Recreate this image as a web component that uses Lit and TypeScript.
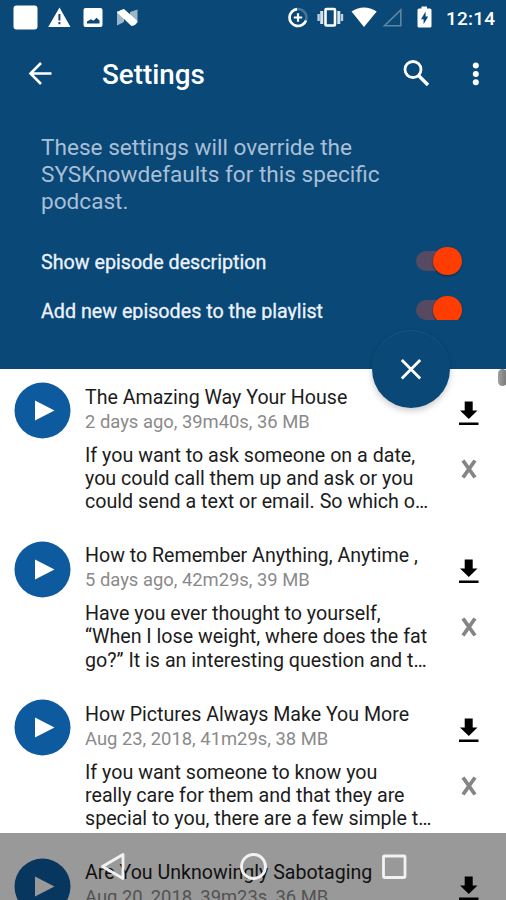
import { LitElement, html, css } from "lit";
import { customElement, property } from "lit/decorators.js";

interface Episode {
  title: string;
  meta: string;
  lines: string[];
}

const EPISODES: Episode[] = [
  {
    title: "The Amazing Way Your House",
    meta: "2 days ago, 39m40s, 36 MB",
    lines: ["If you want to ask someone on a date,", "you could call them up and ask or you", "could send a text or email. So which o…"],
  },
  {
    title: "How to Remember Anything, Anytime ,",
    meta: "5 days ago, 42m29s, 39 MB",
    lines: ["Have you ever thought to yourself,", "“When I lose weight, where does the fat", "go?” It is an interesting question and t…"],
  },
  {
    title: "How Pictures Always Make You More",
    meta: "Aug 23, 2018, 41m29s, 38 MB",
    lines: ["If you want someone to know you", "really care for them and that they are", "special to you, there are a few simple t…"],
  },
  {
    title: "Are You Unknowingly Sabotaging",
    meta: "Aug 20, 2018, 39m23s, 36 MB",
    lines: [],
  },
];

@customElement("status-bar")
class StatusBar extends LitElement {
  static styles = css`
    :host { display: block; height: 36px; }
    svg { display: block; }
    text { font: 500 19px Roboto, sans-serif; letter-spacing: 0.2px; }
  `;
  render() {
    return html`<svg width="506" height="36" viewBox="0 0 506 36" fill="#fff">
      <rect x="13.5" y="5.5" width="24" height="24" rx="3" />
      <path fill-rule="evenodd" d="M59.5 7.5 70.5 27H48.2ZM58.4 14v6.5h2V14ZM58.4 22v2.3h2V22Z" />
      <path fill-rule="evenodd" d="M85.5 8h15a2 2 0 0 1 2 2v15a2 2 0 0 1-2 2h-15a2 2 0 0 1-2-2V10a2 2 0 0 1 2-2ZM87 23.500h12.500V20.500l-3-2.800-3 3-2.500-1.500-4 2.300Z" />
      <path opacity=".6" d="M117 11 124 13V22L117 25.500ZM130 12 137.500 9.500V23L130 21Z" />
      <path d="M117 12.500Q120 9.500 124 9L137.500 21Q136.500 25.500 131.500 26Z" />
      <g fill="none" stroke="#fff" stroke-width="2.600">
        <circle cx="298" cy="17.500" r="8.500" opacity=".25" />
        <path d="M297 9.100A8.500 8.500 0 1 0 306 20.500" />
        <path d="M298 13.300v8.400M293.800 17.500h8.400" stroke-width="2.200" />
        <rect x="325.500" y="9" width="9.500" height="16.500" rx="1" />
        <path d="M321.700 11v13M338.800 11v13" stroke-width="3" opacity=".85" />
        <path d="M318.600 14v7M342 14v7" stroke-width="2.400" opacity=".75" />
      </g>
      <path d="M364 27 351.500 11.500Q364 3.500 376.700 11.500Z" />
      <path d="M400.800 10v15.800H384.500Z" fill="none" stroke="#fff" stroke-width="1.600" opacity=".35" />
      <path fill-rule="evenodd" d="M421.500 6.500h5.500v2h3a1.500 1.500 0 0 1 1.500 1.500v16a1.500 1.500 0 0 1-1.500 1.500h-11a1.500 1.500 0 0 1-1.500-1.500v-16a1.500 1.500 0 0 1 1.500-1.500h2.500ZM425.600 11.500l-4.600 7.800h2.600v5l4.600-7.800h-2.600Z" />
      <text x="446" y="24.500">12:14</text>
    </svg>`;
  }
}

@customElement("toggle-row")
class ToggleRow extends LitElement {
  @property() label = "";
  static styles = css`
    :host { display: flex; align-items: center; height: 49px; flex: none; padding: 0 44.500px 0 41px; justify-content: space-between; }
    .label { margin-top: 2px; font: 19.700px/24px Roboto, sans-serif; color: #edf2fb; white-space: nowrap; -webkit-text-stroke: 0.3px #edf2fb; }
    .track { width: 45.500px; height: 20px; border-radius: 10px; background: #554a61; display: flex; align-items: center; justify-content: flex-end; margin-top: -1px; }
    .thumb { width: 28.500px; height: 28.500px; flex: none; border-radius: 50%; background: #ff3d00; box-shadow: 0 1px 2px rgba(0, 0, 0, 0.4); }
  `;
  render() {
    return html`<span class="label">${this.label}</span><span class="track"><span class="thumb"></span></span>`;
  }
}

@customElement("episode-row")
class EpisodeRow extends LitElement {
  @property({ attribute: false }) episode!: Episode;
  static styles = css`
    :host { display: grid; grid-template-columns: 85px minmax(0, 1fr) 75px; height: 158.500px; flex: none; font: 19.670px/23.200px Roboto, sans-serif; color: #1c1c1c; white-space: nowrap; }
    svg { display: block; }
    .play { padding: 13.900px 0 0 14px; }
    .body { padding-top: 16.400px; }
    .title { line-height: 25px; font-size: 19.600px; }
    .meta { line-height: 24px; color: #8a8a8a; font-size: 18.400px; }
    .text { margin-top: 9.800px; }
    .actions { padding: 32px 0 0 26px; }
  `;
  render() {
    const e = this.episode;
    return html`
      <div class="play">
        <svg width="57" height="57" viewBox="0 0 57 57"><circle cx="28.500" cy="28.500" r="28" fill="#0d5a9e" /><path d="M21 18.500v20L40.500 28.500Z" fill="#fff" /></svg>
      </div>
      <div class="body">
        <div class="title">${e.title}</div>
        <div class="meta">${e.meta}</div>
        <div class="text">${e.lines.map((l) => html`<div>${l}</div>`)}</div>
      </div>
      <div class="actions">
        <svg width="30" height="82" viewBox="0 0 30 82">
          <path d="M7.700 0.500h8v9H20.500L11.800 18 3 9.500H7.700ZM2 21.500h19.500v2.500H2Z" />
          <path d="M6 59.500 18 76.500M18 59.500 6 76.500" stroke="#858585" stroke-width="3.800" />
        </svg>
      </div>`;
  }
}

@customElement("app-root")
class AppRoot extends LitElement {
  static styles = css`
    :host { display: flex; flex-direction: column; position: relative; width: 506px; height: 900px; overflow: hidden; background: #fff; font-family: Roboto, sans-serif; }
    .header { height: 368.500px; flex: none; background: #094877; color: #fff; }
    .bar { height: 76px; display: flex; align-items: center; }
    .bar svg { display: block; flex: none; }
    .bar h1 { margin: 2px auto 0 46px; font: 500 27.800px/32px Roboto, sans-serif; }
    .settings { height: 208px; overflow: hidden; display: flex; flex-direction: column; }
    .note { margin: 22px 0 22px 41px; flex: none; font-size: 22.600px; line-height: 27px; color: #a9bfd6; white-space: nowrap; }
    .list { display: flex; flex-direction: column; flex: 1; min-height: 0; overflow: hidden; }
    .fab { position: absolute; left: 372px; top: 330px; width: 78px; height: 78px; border-radius: 50%; background: #094877; box-shadow: 0 3px 6px rgba(0, 0, 0, 0.2), inset 0 1px 0 rgba(255, 255, 255, 0.07); }
    .scroll { position: absolute; left: 498px; top: 369px; width: 9px; height: 17px; border-radius: 5px; background: linear-gradient(90deg, #a0a0a0, #777); }
    .nav { position: absolute; left: 0; bottom: 0; width: 506px; height: 67px; background: rgba(0, 0, 0, 0.4); }
  `;
  render() {
    return html`
      <div class="header">
        <status-bar></status-bar>
        <div class="bar">
          <svg width="56" height="40" viewBox="0 0 56 40" fill="none" stroke="#fff" stroke-width="2.600"><path d="M51.500 19.500H31M41 9 30.500 19.500 41 30" /></svg>
          <h1>Settings</h1>
          <svg width="106" height="40" viewBox="0 0 106 40" fill="none" stroke="#fff"><circle cx="13" cy="15.500" r="8" stroke-width="2.800" /><path d="M18.500 21.500 28 31" stroke-width="3.400" /><g fill="#fff" stroke="none"><circle cx="75.800" cy="11.500" r="3" /><circle cx="75.800" cy="20" r="3" /><circle cx="75.800" cy="28.300" r="3" /></g></svg>
        </div>
        <div class="settings">
          <div class="note">These settings will override the<br />SYSKnowdefaults for this specific<br />podcast.</div>
          <toggle-row label="Show episode description"></toggle-row>
          <toggle-row label="Add new episodes to the playlist"></toggle-row>
        </div>
      </div>
      <div class="list">${EPISODES.map((e) => html`<episode-row .episode=${e}></episode-row>`)}</div>
      <div class="scroll"></div>
      <div class="fab"><svg width="78" height="78" viewBox="0 0 78 78"><path d="M29.800 30 48.200 48.500M48.200 30 29.800 48.500" stroke="#fff" stroke-width="2.800" /></svg></div>
      <div class="nav"><svg width="506" height="67" viewBox="0 0 506 67" fill="none" stroke="#f2f2f2" stroke-width="2.800" stroke-linejoin="round"><path d="M123 21.500v24L102.500 33.500Z" /><circle cx="253.500" cy="33.500" r="12" /><rect x="383.500" y="23" width="21.500" height="21.500" rx="1" /></svg></div>`;
  }
}
